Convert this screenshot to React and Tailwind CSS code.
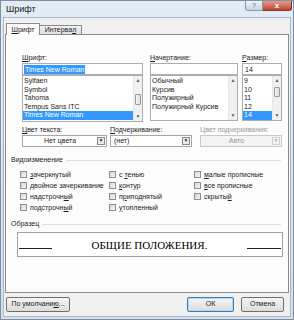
import React from 'react';

const fonts = ['Sylfaen', 'Symbol', 'Tahoma', 'Tempus Sans ITC', 'Times New Roman'];
const styles = ['Обычный', 'Курсив', 'Полужирный', 'Полужирный Курсив'];
const sizes = ['9', '10', '11', '12', '14'];

function Scrollbar({ thumbTop, thumbHeight }) {
  return (
    <div className="w-[9px] shrink-0 bg-[#f0f0f0] border-l border-[#e6e6e6] flex flex-col items-center">
      <div className="h-[9px] w-full flex items-center justify-center text-[5px] text-[#606060]">▲</div>
      <div className="flex-1 w-full relative">
        {thumbHeight ? (
          <div
            className="absolute left-[1px] right-[1px] border border-[#9a9a9a] rounded-[1px] bg-gradient-to-r from-[#f3f3f3] to-[#dcdcdc]"
            style={{ top: thumbTop, height: thumbHeight }}
          />
        ) : null}
      </div>
      <div className="h-[9px] w-full flex items-center justify-center text-[5px] text-[#606060]">▼</div>
    </div>
  );
}

function ListBox({ items, selected, height, thumbTop, thumbHeight }) {
  return (
    <div className="flex border border-[#abadb3] bg-white" style={{ height }}>
      <div className="flex-1 min-w-0 pt-[1px] overflow-hidden">
        {items.map((it) => (
          <div
            key={it}
            className={`h-[8.6px] leading-[8.6px] pl-[1px] whitespace-nowrap ${
              it === selected ? 'bg-[#3399ff] text-white' : ''
            }`}
          >
            {it}
          </div>
        ))}
      </div>
      <Scrollbar thumbTop={thumbTop} thumbHeight={thumbHeight} />
    </div>
  );
}

function Dropdown({ value, center, disabled }) {
  return (
    <div className={`h-[12px] flex items-center border ${disabled ? 'border-[#c9c9c9] bg-[#f4f4f4]' : 'border-[#a7a7a7] bg-white'}`}>
      <span className={`flex-1 leading-[10px] whitespace-nowrap ${center ? 'text-center' : 'pl-[3px]'} ${disabled ? 'text-[#9a9a9a]' : ''}`}>{value}</span>
      <div className={`w-[8px] h-[8px] mr-[1px] border flex items-center justify-center text-[5px] ${disabled ? 'border-[#d0d0d0] text-[#b0b0b0]' : 'border-[#8a8a8a] text-[#333] bg-[#e9e9e9]'}`}>▼</div>
    </div>
  );
}

function Check({ children }) {
  return (
    <div className="h-[11px] flex items-center gap-[3px] whitespace-nowrap">
      <div className="w-[7px] h-[7px] shrink-0 border border-[#8e8f8f] bg-gradient-to-br from-[#d4d4d4] to-[#f7f7f7]" />
      <span className="leading-[8px]">{children}</span>
    </div>
  );
}

function Group({ title }) {
  return (
    <div className="h-[8px] flex items-center gap-[3px]">
      <span className="leading-[8px] whitespace-nowrap">{title}</span>
      <div className="flex-1 h-px bg-[#d5dfe5] mr-[3px]" />
    </div>
  );
}

function Button({ children, width, primary }) {
  return (
    <div
      className={`h-[15px] flex items-center justify-center whitespace-nowrap rounded-[2px] border bg-gradient-to-b from-[#f5f5f5] to-[#dcdcdc] ${
        primary ? 'border-[#3c7fb1] shadow-[inset_0_0_0_1px_#a6d9f4]' : 'border-[#707070]'
      }`}
      style={{ width }}
    >
      {children}
    </div>
  );
}

export default function App() {
  return (
    <div className="w-[294px] h-[320px] flex flex-col bg-gradient-to-b from-[#e3ebf4] to-[#d3dfec] border border-[#7d8fa5] text-[7px] text-[#1b1b1b] font-['Liberation_Sans',Arial,sans-serif] overflow-hidden">
      <div className="h-[16px] flex items-start shrink-0">
        <span className="pl-[5px] pt-[3px] text-[9px] leading-[10px] text-[#1a1a1a]">Шрифт</span>
        <div className="ml-auto flex mr-[1px]">
          <div className="w-[18px] h-[10px] rounded-bl-[3px] border border-t-0 border-[#8a97a8] bg-gradient-to-b from-[#eef3f8] to-[#c6d3e2] flex items-center justify-center text-[7px] leading-none text-[#5a6b80]">?</div>
          <div className="w-[29px] h-[10px] rounded-br-[3px] border border-t-0 border-l-0 border-[#7a3a33] bg-gradient-to-b from-[#e59a8d] to-[#c4412f] flex items-center justify-center text-[8px] leading-none text-white font-bold">x</div>
        </div>
      </div>

      <div className="flex-1 mx-[2px] mb-[2px] bg-[#f0f0f0] border border-[#a9b8c9] flex flex-col px-[1px]">
        <div className="h-[16px] flex items-end pl-[1px] shrink-0">
          <div className="w-[34px] h-[12px] -mb-px relative z-10 bg-[#fcfcfc] border border-b-0 border-[#898c95] flex items-center justify-center leading-[8px]">
            <span><u>Ш</u>рифт</span>
          </div>
          <div className="w-[42px] h-[9px] border border-b-0 border-l-0 border-[#898c95] bg-gradient-to-b from-[#f2f2f2] to-[#dedede] flex items-center justify-center leading-[8px]">
            <span>Интерва<u>л</u></span>
          </div>
        </div>

        <div className="h-[259px] shrink-0 border border-[#898c95] bg-[#fcfcfc] flex flex-col pl-[5px] pr-[4px]">
          <div className="flex items-start pt-[19px] pl-[11px]">
            <div className="w-[121px] flex flex-col">
              <div className="h-[8px] leading-[8px] mb-[1px]"><u>Ш</u>рифт:</div>
              <div className="h-[12px] border border-[#abadb3] bg-white flex items-center px-[1px]">
                <span className="bg-[#3399ff] text-white leading-[9px] px-[1px]">Times New Roman</span>
              </div>
              <ListBox items={fonts} selected="Times New Roman" height={47} thumbTop={9} thumbHeight={11} />
            </div>
            <div className="w-[88px] ml-[7px] flex flex-col">
              <div className="h-[8px] leading-[8px] mb-[1px]"><u>Н</u>ачертание:</div>
              <div className="h-[12px] border border-[#abadb3] bg-white" />
              <ListBox items={styles} height={46} />
            </div>
            <div className="w-[40px] ml-[4px] flex flex-col">
              <div className="h-[8px] leading-[8px] mb-[1px]"><u>Р</u>азмер:</div>
              <div className="h-[12px] border border-[#abadb3] bg-white flex items-center pl-[2px] leading-[9px]">14</div>
              <ListBox items={sizes} selected="14" height={46} thumbTop={2} thumbHeight={10} />
            </div>
          </div>

          <div className="flex mt-[4px] pl-[11px]">
            <div className="w-[85px] flex flex-col">
              <div className="h-[8px] leading-[8px] mb-[1px] whitespace-nowrap"><u>Ц</u>вет текста:</div>
              <Dropdown value="Нет цвета" center />
            </div>
            <div className="w-[82px] ml-[3px] flex flex-col">
              <div className="h-[8px] leading-[8px] mb-[1px] whitespace-nowrap"><u>П</u>одчеркивание:</div>
              <Dropdown value="(нет)" />
            </div>
            <div className="w-[82px] ml-[8px] flex flex-col">
              <div className="h-[8px] leading-[8px] mb-[1px] whitespace-nowrap text-[#9a9a9a]">Цвет подчеркивания:</div>
              <Dropdown value="Авто" center disabled />
            </div>
          </div>

          <div className="mt-[9px]">
            <Group title="Видоизменение" />
          </div>
          <div className="flex mt-[5px] pl-[9px]">
            <div className="w-[89px] flex flex-col">
              <Check><u>з</u>ачеркнутый</Check>
              <Check><u>д</u>войное зачеркивание</Check>
              <Check>надстрочн<u>ы</u>й</Check>
              <Check>подстрочн<u>ы</u>й</Check>
            </div>
            <div className="w-[85px] flex flex-col">
              <Check>с <u>т</u>енью</Check>
              <Check><u>к</u>онтур</Check>
              <Check>п<u>р</u>иподнятый</Check>
              <Check><u>у</u>топленный</Check>
            </div>
            <div className="flex flex-col">
              <Check><u>м</u>алые прописные</Check>
              <Check><u>в</u>се прописные</Check>
              <Check>скрыты<u>й</u></Check>
            </div>
          </div>

          <div className="mt-[7px]">
            <Group title="Образец" />
          </div>
          <div className="mt-[4px] ml-[6px] w-[266px] h-[25px] border border-[#a0a0a0] bg-white flex items-center">
            <div className="w-[33px] h-px bg-[#222] ml-[1px] mt-[8px]" />
            <div className="flex-1 text-center font-['Liberation_Serif',serif] text-[11px] leading-[12px] text-black">ОБЩИЕ ПОЛОЖЕНИЯ.</div>
            <div className="w-[34px] h-px bg-[#222] mr-[1px] mt-[8px]" />
          </div>
        </div>

        <div className="flex items-center mt-[4px] pl-[1px] pr-[5px]">
          <Button width={64}>По умолчани<u>ю</u>...</Button>
          <div className="ml-auto flex gap-[7px]">
            <Button width={47} primary>ОК</Button>
            <Button width={43}>Отмена</Button>
          </div>
        </div>
      </div>
    </div>
  );
}
